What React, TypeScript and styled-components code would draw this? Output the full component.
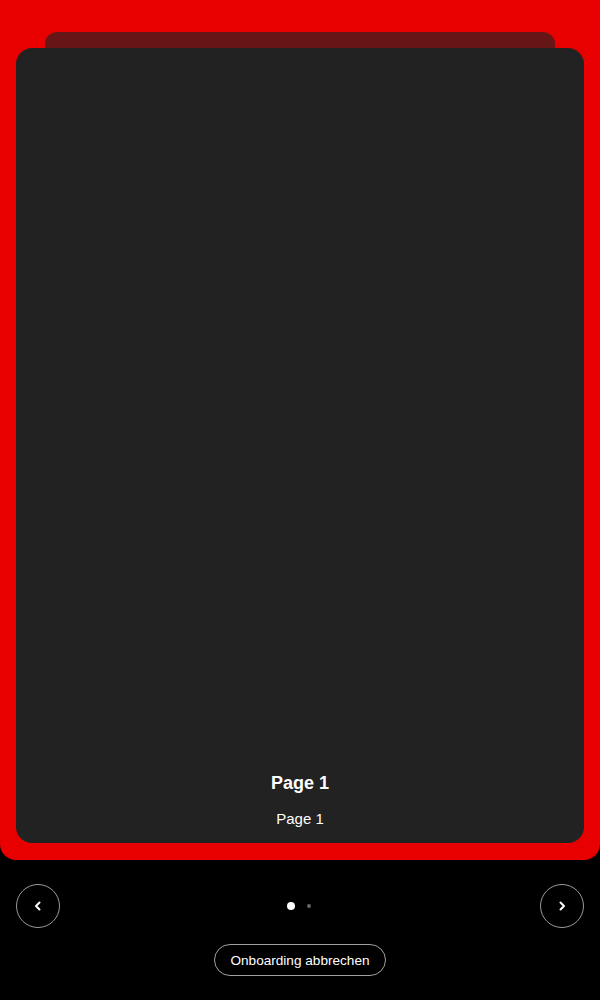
import React, { useState } from "react";
import styled, { createGlobalStyle } from "styled-components";

const GlobalStyle = createGlobalStyle`
	html, body {
		margin: 0;
		padding: 0;
		background: #000;
		font-family: "Liberation Sans", Arial, sans-serif;
		color: #fff;
	}
	* { box-sizing: border-box; }
`;

const pages = [
	{ title: "Page 1", text: "Page 1" },
	{ title: "Page 2", text: "Page 2" },
];

export default function App() {
	const [index, setIndex] = useState(0);
	const page = pages[index];

	return (
		<>
			<GlobalStyle />
			<Root>
				<Stage>
					<BackCard />
					<Card>
						<Title>{page.title}</Title>
						<Body>{page.text}</Body>
					</Card>
				</Stage>

				<Controls>
					<NavButton
						aria-label="Zurück"
						onClick={() => setIndex((i) => Math.max(0, i - 1))}
					>
						<Chevron dir="left" />
					</NavButton>
					<Dots>
						{pages.map((_, i) => (
							<Dot key={i} active={i === index} />
						))}
					</Dots>
					<NavButton
						aria-label="Weiter"
						onClick={() => setIndex((i) => Math.min(pages.length - 1, i + 1))}
					>
						<Chevron dir="right" />
					</NavButton>
				</Controls>

				<Footer>
					<CancelButton>Onboarding abbrechen</CancelButton>
				</Footer>
			</Root>
		</>
	);
}

function Chevron({ dir }: { dir: "left" | "right" }) {
	return (
		<svg width="12" height="12" viewBox="0 0 12 12" fill="none">
			<path
				d={dir === "left" ? "M7.5 2.5 L4 6 L7.5 9.5" : "M4.5 2.5 L8 6 L4.5 9.5"}
				stroke="#fff"
				strokeWidth="2"
				strokeLinecap="round"
				strokeLinejoin="round"
			/>
		</svg>
	);
}

// Styled
const Root = styled.div`
	width: 600px;
	height: 1000px;
	display: flex;
	flex-direction: column;
	background: #000;
`;
const Stage = styled.div`
	position: relative;
	height: 860px;
	background: #e80000;
	border-radius: 0 0 16px 16px;
	padding: 48px 16px 17px;
	display: flex;
`;
const BackCard = styled.div`
	position: absolute;
	top: 32px;
	left: 45px;
	right: 45px;
	height: 60px;
	background: #661616;
	border-radius: 12px;
`;
const Card = styled.div`
	position: relative;
	flex: 1;
	background: #222;
	border-radius: 16px;
	display: flex;
	flex-direction: column;
	justify-content: flex-end;
	align-items: center;
	padding-bottom: 14px;
`;
const Title = styled.div`
	font-size: 18px;
	font-weight: 700;
	line-height: 20px;
	margin-bottom: 16px;
`;
const Body = styled.div`
	font-size: 15px;
	line-height: 20px;
`;
const Controls = styled.div`
	display: flex;
	align-items: center;
	justify-content: space-between;
	padding: 24px 16px 0;
`;
const NavButton = styled.button`
	width: 44px;
	height: 44px;
	border-radius: 50%;
	border: 1px solid #9a9a9a;
	background: transparent;
	display: flex;
	align-items: center;
	justify-content: center;
	padding: 0;
	cursor: pointer;
`;
const Dots = styled.div`
	display: flex;
	align-items: center;
	gap: 12px;
	margin-right: 2px;
`;
const Dot = styled.span<{ active: boolean }>`
	width: ${(p) => (p.active ? "8px" : "4px")};
	height: ${(p) => (p.active ? "8px" : "4px")};
	border-radius: 50%;
	background: ${(p) => (p.active ? "#fff" : "#666")};
`;
const Footer = styled.div`
	display: flex;
	justify-content: center;
	padding-top: 16px;
`;
const CancelButton = styled.button`
	height: 32px;
	padding: 0 15px;
	border-radius: 999px;
	border: 1px solid #a0a0a0;
	background: transparent;
	color: #fff;
	font-family: "Liberation Sans", Arial, sans-serif;
	font-size: 13.6px;
	cursor: pointer;
`;
